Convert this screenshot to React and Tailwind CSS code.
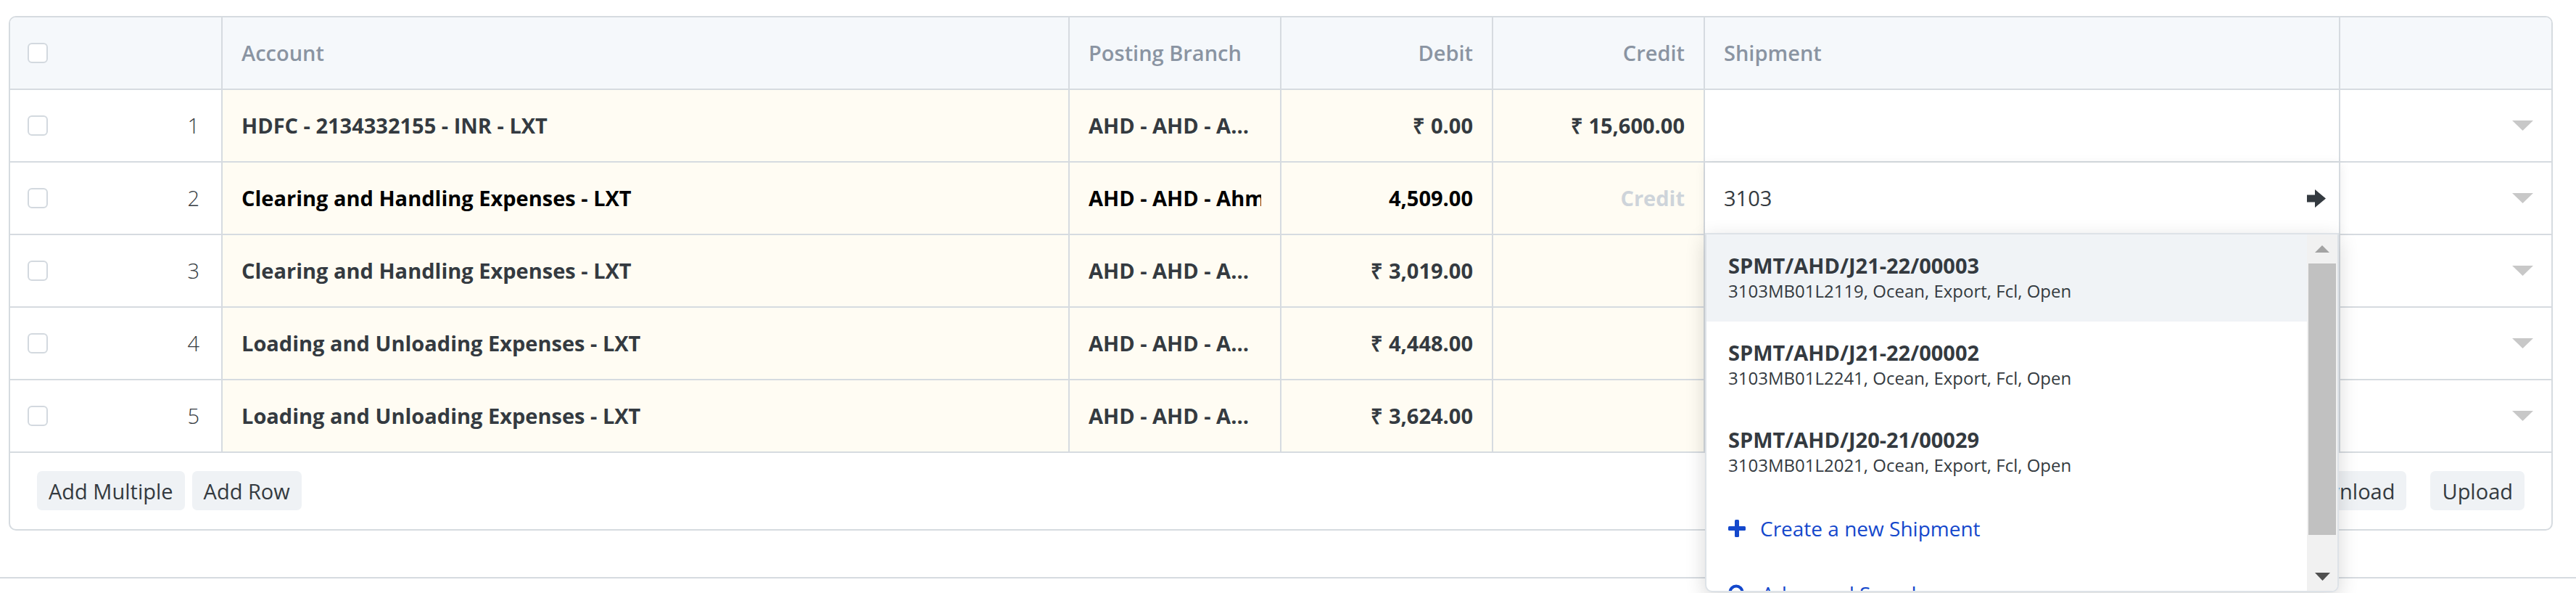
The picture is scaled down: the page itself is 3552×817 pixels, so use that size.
import React from "react";

const rows = [
  { n: 1, account: "HDFC - 2134332155 - INR - LXT", branch: "AHD - AHD - Ahmedabad", debit: "₹ 0.00", credit: "₹ 15,600.00" },
  { n: 2, account: "Clearing and Handling Expenses - LXT", branch: "AHD - AHD - Ahmedabad", debit: "4,509.00", credit: "", editing: true },
  { n: 3, account: "Clearing and Handling Expenses - LXT", branch: "AHD - AHD - Ahmedabad", debit: "₹ 3,019.00", credit: "" },
  { n: 4, account: "Loading and Unloading Expenses - LXT", branch: "AHD - AHD - Ahmedabad", debit: "₹ 4,448.00", credit: "" },
  { n: 5, account: "Loading and Unloading Expenses - LXT", branch: "AHD - AHD - Ahmedabad", debit: "₹ 3,624.00", credit: "" },
];

const shipments = [
  { code: "SPMT/AHD/J21-22/00003", meta: "3103MB01L2119, Ocean, Export, Fcl, Open" },
  { code: "SPMT/AHD/J21-22/00002", meta: "3103MB01L2241, Ocean, Export, Fcl, Open" },
  { code: "SPMT/AHD/J20-21/00029", meta: "3103MB01L2021, Ocean, Export, Fcl, Open" },
];

const GRID = "grid grid-cols-[293px_1168px_292px_292px_292px_876px_1fr]";

function Checkbox() {
  return <span className="block w-[28px] h-[28px] rounded-[6px] border-2 border-[#d3d9df] bg-white" />;
}

function Caret() {
  return (
    <svg width="29" height="14" viewBox="0 0 29 14">
      <polygon points="0,0 29,0 14.5,14" fill="#c8c8c8" />
    </svg>
  );
}

function ArrowRight() {
  return (
    <svg width="26" height="25" viewBox="0 0 26 25">
      <polygon points="0,7.5 11,7.5 11,0 26,12.5 11,25 11,17.5 0,17.5" fill="#343a40" />
    </svg>
  );
}

function ShipmentMenu() {
  return (
    <div className="absolute left-0 top-[97px] z-20 w-[874px] h-[495px] flex bg-white border-2 border-[#dde2e7] rounded-b-[10px] overflow-hidden shadow-[0_8px_28px_rgba(0,0,0,0.16)]">
      <div className="flex-1 overflow-hidden">
        {shipments.map((s, i) => (
          <div key={s.code} className={`h-[120px] pl-[30px] pt-[24px] ${i === 0 ? "bg-[#f0f3f6]" : "bg-white"}`}>
            <div className="text-[29px] leading-[38px] font-bold text-[#343a40]">{s.code}</div>
            <div className="text-[24px] leading-[32px] font-normal text-[#343a40]">{s.meta}</div>
          </div>
        ))}
        <div className="h-[90px] pl-[30px] flex items-center gap-[20px] text-[#1448cc]">
          <svg width="24" height="24" viewBox="0 0 24 24">
            <rect x="9" y="0" width="6" height="24" rx="1.5" fill="#1448cc" />
            <rect x="0" y="9" width="24" height="6" rx="1.5" fill="#1448cc" />
          </svg>
          <span className="text-[28px]">Create a new Shipment</span>
        </div>
        <div className="h-[90px] pl-[30px] flex items-center gap-[20px] text-[#1448cc]">
          <svg width="26" height="26" viewBox="0 0 26 26">
            <circle cx="11" cy="11" r="8.5" fill="none" stroke="#1448cc" strokeWidth="4" />
            <line x1="17" y1="17" x2="24" y2="24" stroke="#1448cc" strokeWidth="4.5" strokeLinecap="round" />
          </svg>
          <span className="text-[28px]">Advanced Search</span>
        </div>
      </div>
      <div className="w-[42px] bg-[#f1f1f1] flex flex-col items-center">
        <div className="h-[40px] flex items-center justify-center">
          <svg width="20" height="10" viewBox="0 0 20 10">
            <polygon points="10,0 20,10 0,10" fill="#a3a3a3" />
          </svg>
        </div>
        <div className="w-[38px] h-[374px] bg-[#c1c1c1]" />
        <div className="flex-1 flex items-end justify-center pb-[14px]">
          <svg width="21" height="11" viewBox="0 0 21 11">
            <polygon points="0,0 21,0 10.5,11" fill="#505050" />
          </svg>
        </div>
      </div>
    </div>
  );
}

function Row({ r }) {
  const cream = "bg-[#fffcf3]";
  const cell = "h-full border-r-2 border-[#d6dbe0] flex items-center min-w-0";
  return (
    <div className={`${GRID} h-[100px] border-b-2 border-[#d6dbe0]`}>
      <div className={`${cell} justify-between pl-[24px] pr-[30px] bg-white`}>
        <Checkbox />
        <span className="font-light text-[29px]">{r.n}</span>
      </div>
      <div className={`${cell} ${cream} px-[26px] font-bold ${r.editing ? "text-black" : ""}`}>
        <span className="truncate">{r.account}</span>
      </div>
      <div className={`${cell} ${cream} px-[26px] font-bold ${r.editing ? "text-black" : ""}`}>
        {r.editing ? (
          <span className="overflow-hidden whitespace-nowrap">{r.branch}</span>
        ) : (
          <span className="truncate">{r.branch}</span>
        )}
      </div>
      <div className={`${cell} ${cream} px-[26px] justify-end font-bold ${r.editing ? "text-black" : ""}`}>
        <span className="whitespace-nowrap">{r.debit}</span>
      </div>
      <div className={`${cell} ${cream} px-[26px] justify-end font-bold`}>
        {r.editing ? (
          <span className="text-[#ced4da]">Credit</span>
        ) : (
          <span className="whitespace-nowrap">{r.credit}</span>
        )}
      </div>
      {r.editing ? (
        <div className={`${cell} relative z-10 bg-white pl-[26px] pr-[18px] justify-between shadow-[0_2px_14px_rgba(0,0,0,0.08)]`}>
          <span>3103</span>
          <ArrowRight />
          <ShipmentMenu />
        </div>
      ) : (
        <div className={`${cell} bg-white`} />
      )}
      <div className="h-full flex items-center justify-end pr-[25px] bg-white">
        <Caret />
      </div>
    </div>
  );
}

export default function App() {
  return (
    <div className="w-[3552px] h-[817px] bg-white overflow-hidden font-['Open_Sans',sans-serif] text-[29px] text-[#343a40]">
      <div className="ml-[12px] mt-[22px] w-[3508px] border-2 border-[#d6dbe0] rounded-[10px] bg-white">
        <div className={`${GRID} h-[100px] border-b-2 border-[#d6dbe0] bg-[#f5f8fb] rounded-t-[8px] font-semibold text-[#8a94a2]`}>
          <div className="h-full border-r-2 border-[#d6dbe0] flex items-center pl-[24px]">
            <Checkbox />
          </div>
          <div className="h-full border-r-2 border-[#d6dbe0] flex items-center px-[26px]">Account</div>
          <div className="h-full border-r-2 border-[#d6dbe0] flex items-center px-[26px]">Posting Branch</div>
          <div className="h-full border-r-2 border-[#d6dbe0] flex items-center justify-end px-[26px]">Debit</div>
          <div className="h-full border-r-2 border-[#d6dbe0] flex items-center justify-end px-[26px]">Credit</div>
          <div className="h-full border-r-2 border-[#d6dbe0] flex items-center px-[26px]">Shipment</div>
          <div className="h-full" />
        </div>
        {rows.map((r) => (
          <Row key={r.n} r={r} />
        ))}
        <div className="flex items-center justify-between px-[37px] pt-[25px] pb-[26px]">
          <div className="flex gap-[10px]">
            <button className="h-[54px] px-[16px] rounded-[7px] bg-[#eff2f5] text-[29px] leading-none">Add Multiple</button>
            <button className="h-[54px] px-[16px] rounded-[7px] bg-[#eff2f5] text-[29px] leading-none">Add Row</button>
          </div>
          <div className="flex gap-[33px]">
            <button className="h-[54px] px-[16px] rounded-[7px] bg-[#eff2f5] text-[29px] leading-none">Download</button>
            <button className="h-[54px] px-[16px] rounded-[7px] bg-[#eff2f5] text-[29px] leading-none">Upload</button>
          </div>
        </div>
      </div>
      <div className="mt-[64px] border-t-2 border-[#d6dbe0]" />
    </div>
  );
}
